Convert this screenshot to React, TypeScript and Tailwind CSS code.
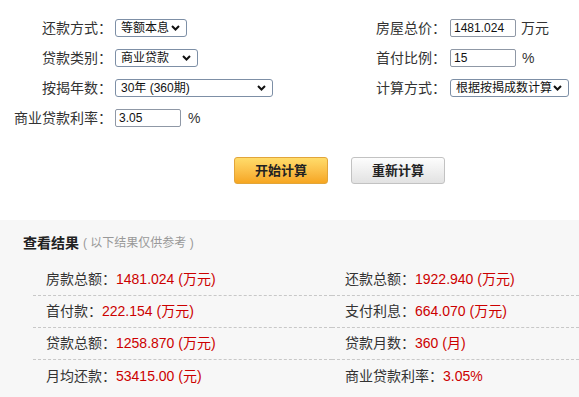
import { ReactNode } from 'react';

const font = { fontFamily: '"Liberation Sans", "Noto Sans CJK SC", sans-serif' };

function Chevron() {
  return (
    <svg width="9" height="6" viewBox="0 0 9 6" className="shrink-0">
      <path d="M1 1 L4.5 4.5 L8 1" fill="none" stroke="#111" strokeWidth="2" />
    </svg>
  );
}

function FakeSelect({ value, width }: { value: string; width: string }) {
  return (
    <div
      className={`${width} h-[18px] flex items-center justify-between pl-[5px] pr-[6px] border border-[#7d8fa6] rounded-[3px] bg-white text-[12px] text-[#111] leading-none`}
    >
      <span className="whitespace-nowrap">{value}</span>
      <Chevron />
    </div>
  );
}

function FakeInput({ value }: { value: string }) {
  return (
    <div className="w-[66px] h-[18px] flex items-center pl-[3px] border border-[#8f98a6] rounded-[2px] bg-white text-[12px] text-[#111] leading-none">
      {value}
    </div>
  );
}

function Row({ label, labelW, gap, children }: { label: string; labelW: string; gap: string; children: ReactNode }) {
  return (
    <div className="h-[30px] flex items-center">
      <div className={`${labelW} ${gap} text-right text-[14px] text-[#333] whitespace-nowrap`}>{label}</div>
      {children}
    </div>
  );
}

function Result({ label, value }: { label: string; value: string }) {
  return (
    <div className="h-[32px] flex items-center pl-[13px] pb-[1px] border-b border-dashed border-[#c8c8c8] text-[14px]">
      <span className="text-[#333]">{label}</span>
      <span className="text-[#cc0000]">{value}</span>
    </div>
  );
}

function ResultLast({ label, value }: { label: string; value: string }) {
  return (
    <div className="h-[32px] flex items-center pl-[13px] text-[14px]">
      <span className="text-[#333]">{label}</span>
      <span className="text-[#cc0000]">{value}</span>
    </div>
  );
}

export default function App() {
  return (
    <div className="w-[579px] h-[397px] bg-white overflow-hidden" style={font}>
      <div className="pt-[13px] grid grid-cols-[330px_1fr]">
        <div>
          <Row label="还款方式：" labelW="w-[112px]" gap="mr-[3px]">
            <FakeSelect value="等额本息" width="w-[72px]" />
          </Row>
          <Row label="贷款类别：" labelW="w-[112px]" gap="mr-[3px]">
            <FakeSelect value="商业贷款" width="w-[83px]" />
          </Row>
          <Row label="按揭年数：" labelW="w-[112px]" gap="mr-[3px]">
            <FakeSelect value="30年 (360期)" width="w-[158px]" />
          </Row>
          <Row label="商业贷款利率：" labelW="w-[112px]" gap="mr-[3px]">
            <FakeInput value="3.05" />
            <span className="ml-[7px] text-[14px] text-[#333]">%</span>
          </Row>
        </div>
        <div>
          <Row label="房屋总价：" labelW="w-[116px]" gap="mr-[4px]">
            <FakeInput value="1481.024" />
            <span className="ml-[5px] text-[14px] text-[#333]">万元</span>
          </Row>
          <Row label="首付比例：" labelW="w-[116px]" gap="mr-[4px]">
            <FakeInput value="15" />
            <span className="ml-[6px] text-[14px] text-[#333]">%</span>
          </Row>
          <Row label="计算方式：" labelW="w-[116px]" gap="mr-[4px]">
            <FakeSelect value="根据按揭成数计算" width="w-[119px]" />
          </Row>
        </div>
      </div>

      <div className="mt-[24px] pl-[234px] flex gap-[23px]">
        <button className="w-[94px] h-[27px] rounded-[3px] border border-[#e2a53a] bg-gradient-to-b from-[#ffdc6a] to-[#f6a61f] text-[13px] font-bold text-[#222]">
          开始计算
        </button>
        <button className="w-[94px] h-[27px] rounded-[3px] border border-[#c2c2c2] bg-gradient-to-b from-[#fdfdfd] to-[#e2e2e2] text-[13px] font-bold text-[#222]">
          重新计算
        </button>
      </div>

      <div className="mt-[36px] h-[200px] bg-[#f7f7f7] pt-[14px]">
        <div className="pl-[23px] h-[18px] flex items-center">
          <span className="text-[14px] font-bold text-[#222]">查看结果</span>
          <span className="ml-[4px] text-[12px] text-[#999]">( 以下结果仅供参考 )</span>
        </div>
        <div className="mt-[12px] ml-[33px] grid grid-cols-[299px_1fr]">
          <Result label="房款总额：" value="1481.024 (万元)" />
          <Result label="还款总额：" value="1922.940 (万元)" />
          <Result label="首付款：" value="222.154 (万元)" />
          <Result label="支付利息：" value="664.070 (万元)" />
          <Result label="贷款总额：" value="1258.870 (万元)" />
          <Result label="贷款月数：" value="360 (月)" />
          <ResultLast label="月均还款：" value="53415.00 (元)" />
          <ResultLast label="商业贷款利率：" value="3.05%" />
        </div>
      </div>
    </div>
  );
}
